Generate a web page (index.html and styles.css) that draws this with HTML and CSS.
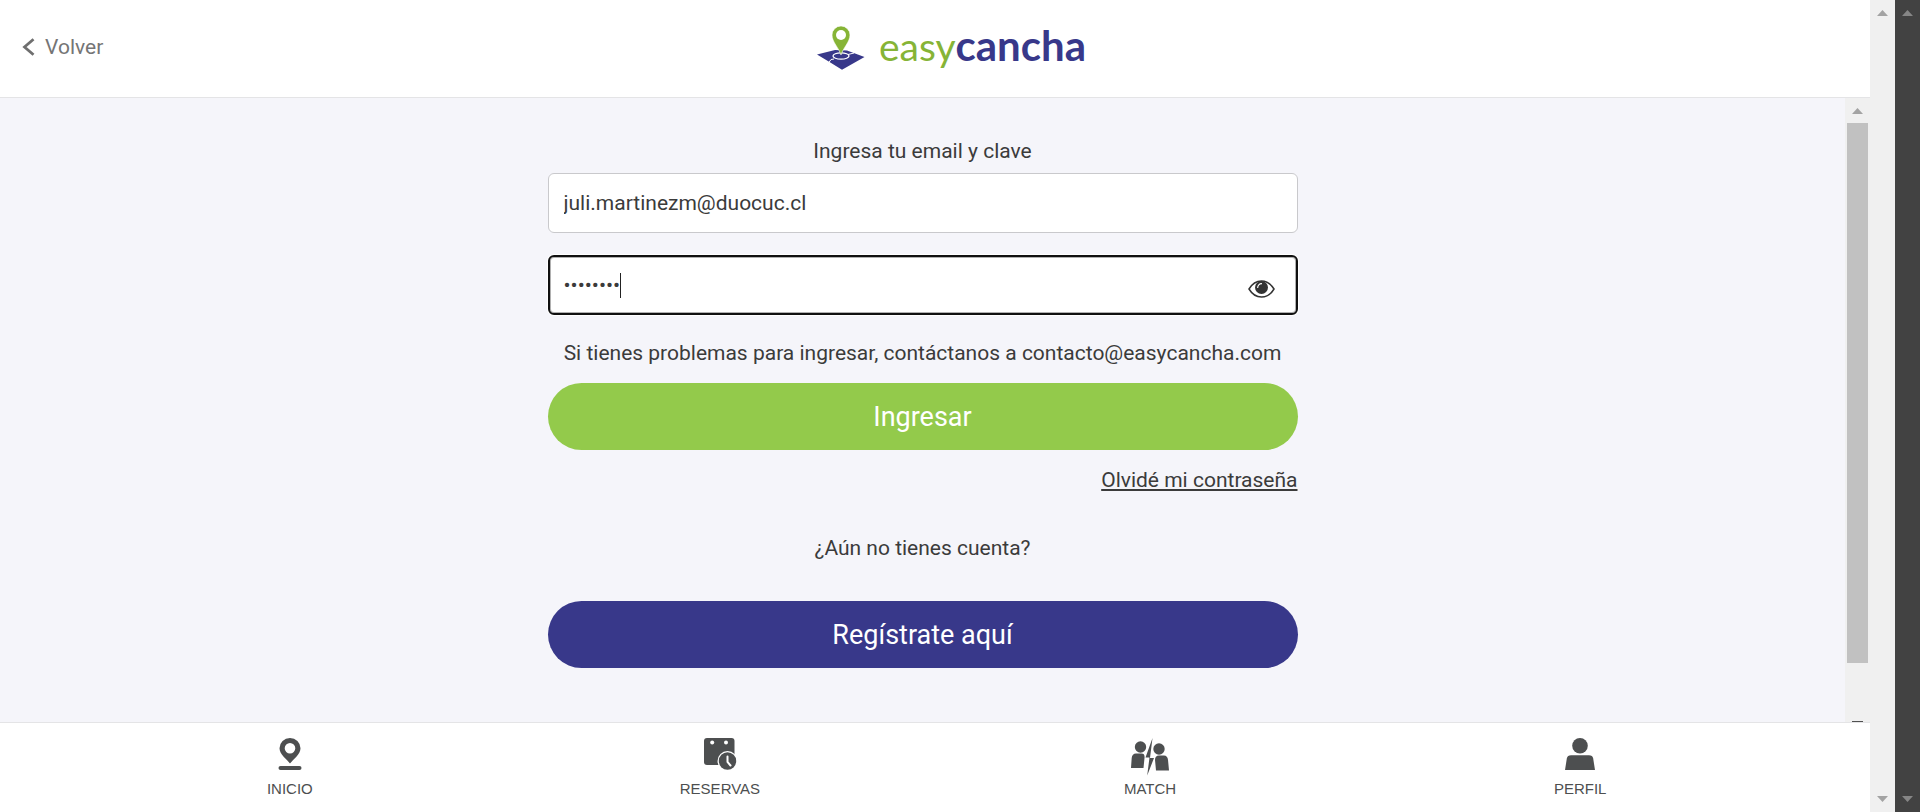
FILE: index.html
```html
<!DOCTYPE html>
<html lang="es">
<head>
<meta charset="utf-8">
<meta name="viewport" content="width=device-width, initial-scale=1">
<title>easycancha - Ingresar</title>
<link rel="stylesheet" href="styles.css">
</head>
<body>
<div class="app">
  <header class="header">
    <a class="back" href="#">
      <svg class="back-icon" width="13" height="18" viewBox="0 0 13 18" aria-hidden="true"><path d="M11.500 1.200L2.500 9L11.500 16.800" fill="none" stroke="#6f6f6f" stroke-width="2.800"/></svg>
      Volver
    </a>
    <a class="logo" href="#">
      <svg width="48" height="45" viewBox="0 0 48 45" aria-hidden="true">
        <path d="M0 28.500L18 24L30 24.500L47.500 31L25 43.800L12.500 36Z" fill="#38388a"/>
        <path d="M11.500 37L14 33.500L17 33" fill="none" stroke="#fff" stroke-width="1"/>
        <path d="M31 28.500L37 27" stroke="#fff" stroke-width="1"/>
        <ellipse cx="24" cy="30" rx="8" ry="3.200" fill="none" stroke="#fff" stroke-width="1.300"/>
        <path d="M24 29C22 22 15 16 15 9A9 9 0 0 1 33 9C33 16 26 22 24 29Z" fill="#86b436" stroke="#fff" stroke-width=".6"/>
        <circle cx="24" cy="9" r="5" fill="#fff"/>
      </svg>
      <span class="wordmark"><span class="word-easy">easy</span><span class="word-cancha">cancha</span></span>
    </a>
  </header>

  <div class="content">
    <main class="main">
      <form class="form">
        <p class="line centered">Ingresa tu email y clave</p>
        <input class="field" type="email" aria-label="Email" value="juli.martinezm@duocuc.cl">
        <div class="password">
          <input class="field active" type="password" aria-label="Clave" value="password">
          <span class="caret"></span>
          <button class="eye" type="button" aria-label="Mostrar clave">
            <svg width="27" height="18" viewBox="0 0 27 18" aria-hidden="true">
              <path d="M1 9C4 4 8.500 1 13.500 1S23 4 26 9C23 14 18.500 17 13.500 17S4 14 1 9Z" fill="none" stroke="#333" stroke-width="1.500"/>
              <circle cx="13.500" cy="7.500" r="6.500" fill="#333"/>
              <path d="M9.700 7.500A3.800 3.800 0 0 1 13.500 3.700" fill="none" stroke="#fff" stroke-width="1.200" stroke-linecap="round"/>
            </svg>
          </button>
        </div>
        <p class="line centered">Si tienes problemas para ingresar, contáctanos a contacto@easycancha.com</p>
        <button class="btn btn-login" type="submit">Ingresar</button>
        <a class="line forgot" href="#">Olvidé mi contraseña</a>
        <p class="line centered account">¿Aún no tienes cuenta?</p>
        <button class="btn btn-register" type="button">Regístrate aquí</button>
      </form>
    </main>
    <div class="bar" aria-hidden="true">
      <svg class="arrow" width="11" height="6" viewBox="0 0 11 6"><path d="M0 6L5.500 0L11 6Z"/></svg>
      <div class="track"><div class="thumb"></div></div>
      <div class="arrow-edge"></div>
    </div>
  </div>

  <nav class="tabs">
    <a class="tab" href="#">
      <svg width="38" height="38" viewBox="0 0 38 38" fill="#4d4f50" aria-hidden="true">
        <path fill-rule="evenodd" d="M19 25.500C16 21.500 8.500 16.500 8.500 10.300A10.500 10.300 0 0 1 29.500 10.300C29.500 16.500 22 21.500 19 25.500ZM19 5A5.300 5.300 0 1 0 19 15.600A5.300 5.300 0 1 0 19 5Z"/>
        <rect x="7.500" y="28" width="23" height="4" rx="2"/>
      </svg>
      <span>INICIO</span>
    </a>
    <a class="tab" href="#">
      <svg width="38" height="38" viewBox="0 0 38 38" fill="#4d4f50" aria-hidden="true">
        <rect x="3" y="0" width="30.500" height="27" rx="3"/>
        <circle cx="11.200" cy="4.500" r="2" fill="#fff"/><circle cx="25" cy="4.500" r="2" fill="#fff"/>
        <circle cx="26.500" cy="23" r="10" fill="#fff"/>
        <circle cx="26.500" cy="23" r="8.700"/>
        <path d="M26.500 18.500V24L29.500 27.500" fill="none" stroke="#fff" stroke-width="2" stroke-linecap="round"/>
      </svg>
      <span>RESERVAS</span>
    </a>
    <a class="tab" href="#">
      <svg width="38" height="38" viewBox="0 0 38 38" fill="#4d4f50" aria-hidden="true">
        <circle cx="9.500" cy="9" r="5.700"/>
        <path d="M0 30L.7 20Q1.200 15.500 5 15.500H10.500Q14 15.500 13.500 20L12.500 30Z"/>
        <circle cx="28" cy="11" r="5.700"/>
        <path d="M25 32.500L24 22Q24 17.500 28 17.500H33Q36.500 17.500 37 22L38 32.500Z"/>
        <path d="M21.500 0L14.500 19.500H18.500L16.200 37.500L23 20H19Z"/>
      </svg>
      <span>MATCH</span>
    </a>
    <a class="tab" href="#">
      <svg width="38" height="38" viewBox="0 0 38 38" fill="#4d4f50" aria-hidden="true">
        <circle cx="19" cy="7.800" r="7.800"/>
        <path d="M4 32L5.800 20.500Q6.500 17.200 10 17.200H28Q31.500 17.200 32.200 20.500L34 32Z"/>
      </svg>
      <span>PERFIL</span>
    </a>
  </nav>
</div>
<div class="bar" aria-hidden="true">
  <svg class="arrow" width="11" height="6" viewBox="0 0 11 6"><path d="M0 6L5.500 0L11 6Z"/></svg>
  <svg class="arrow" width="11" height="6" viewBox="0 0 11 6"><path d="M0 0L5.500 6L11 0Z"/></svg>
</div>
<div class="bar bar-dark" aria-hidden="true">
  <svg class="arrow" width="11" height="6" viewBox="0 0 11 6"><path d="M0 6L5.500 0L11 6Z"/></svg>
  <svg class="arrow" width="11" height="6" viewBox="0 0 11 6"><path d="M0 0L5.500 6L11 0Z"/></svg>
</div>
</body>
</html>
```

FILE: styles.css
```css
* { box-sizing: border-box; }

body {
  margin: 0;
  display: flex;
  min-height: 100vh;
  background: #fff;
  color: #3b3b3b;
  font-family: Roboto, "Liberation Sans", sans-serif;
  font-size: 21px;
  line-height: 30px;
}

.app {
  flex: 1;
  min-width: 0;
  display: flex;
  flex-direction: column;
}

.header {
  display: grid;
  grid-template-columns: 1fr auto 1fr;
  align-items: center;
  height: 98px;
  border-bottom: 1px solid #e4e4e6;
}

.back {
  display: flex;
  align-items: center;
  gap: 10px;
  padding: 0 0 3px 22px;
  color: #757575;
  text-decoration: none;
}

.logo {
  display: flex;
  align-items: center;
  gap: 14px;
  padding-left: 33px;
  text-decoration: none;
}

.wordmark {
  padding-bottom: 7px;
  font-family: Lato, sans-serif;
  font-size: 39px;
  line-height: 48px;
}

.word-easy { color: #86b436; }
.word-cancha { color: #38388a; font-size: 42px; font-weight: 700; }

.content {
  flex: 1;
  display: flex;
  background: #f5f5fa;
}

.main {
  flex: 1;
  padding: 38px 16px;
}

.form {
  display: flex;
  flex-direction: column;
  max-width: 750px;
  margin: 0 auto;
}

.line { margin: 0; }
.centered { text-align: center; }

.field {
  display: block;
  width: 100%;
  height: 60px;
  margin: 7px 0 22px;
  padding: 0 15px;
  border: 1px solid #c9c9cc;
  border-radius: 6px;
  background: #fff;
  color: #3b3b3b;
  font: inherit;
}

.password {
  position: relative;
  margin-bottom: 23px;
}

.active {
  margin: 0;
  padding: 0 14px;
  border: 2px solid #101010;
  box-shadow: 0 0 0 1px #fff, inset 0 0 0 1px #b0b0b0;
}

.caret {
  position: absolute;
  left: 72px;
  top: 18px;
  width: 1px;
  height: 25px;
  background: #222;
}

.eye {
  position: absolute;
  right: 23px;
  top: 25px;
  display: flex;
  padding: 0;
  border: 0;
  background: none;
}

.btn {
  height: 67px;
  padding: 0;
  border: 0;
  border-radius: 34px;
  color: #fff;
  font: 400 27px/32px Roboto, sans-serif;
}

.btn-login {
  margin: 15px 0;
  background: #93ca4b;
}

.btn-register { background: #38388a; }

.forgot {
  align-self: flex-end;
  color: inherit;
}

.account { margin: 38px 0; }

.bar {
  display: flex;
  flex-direction: column;
  align-items: center;
  justify-content: space-between;
  width: 25px;
  padding: 10px 0;
  background: #f0f0f0;
  fill: #a3a3a3;
}

.bar-dark {
  background: #424242;
  fill: #868686;
}

.arrow { display: block; }

.content .bar { padding-bottom: 0; }

.track {
  flex: 1;
  display: flex;
  width: 21px;
  padding: 9px 0 58px;
}

.thumb {
  flex: 1;
  background: #c1c1c1;
}

.arrow-edge {
  width: 11px;
  height: 1px;
  background: #505050;
}

.tabs {
  display: grid;
  grid-template-columns: repeat(4, 1fr);
  height: 90px;
  padding: 15px 4% 0;
  border-top: 1px solid #e4e4e6;
  background: #fff;
}

.tab {
  display: flex;
  flex-direction: column;
  align-items: center;
  gap: 3px;
  color: #4d4f50;
  font: 15px/20px "Liberation Sans", Arial, sans-serif;
  text-decoration: none;
}
```
